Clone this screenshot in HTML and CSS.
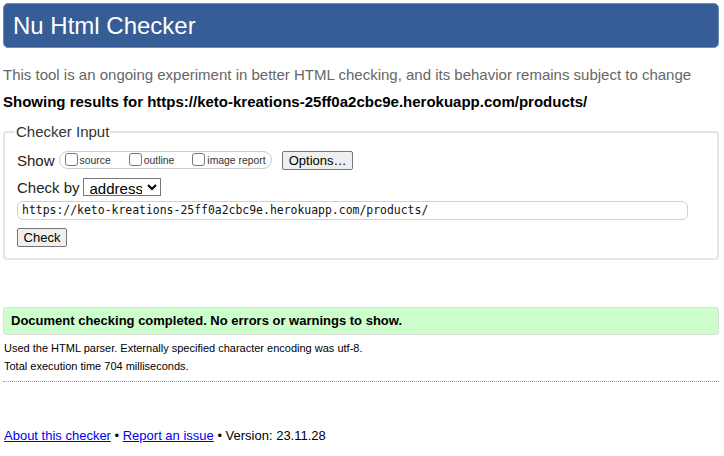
FILE: index.html
```html
<!DOCTYPE html>
<html lang="en">
<head>
<meta charset="utf-8">
<title>Nu Html Checker</title>
<link rel="stylesheet" href="styles.css">
</head>
<body>
<h1 class="banner">Nu Html Checker</h1>
<p class="tagline">This tool is an ongoing experiment in better HTML checking, and its behavior remains subject to change</p>
<p class="results">Showing results for https://keto-kreations-25ff0a2cbc9e.herokuapp.com/products/</p>
<fieldset class="input-box">
  <legend>Checker Input</legend>
  <div class="row show-row">
    <span class="label">Show</span>
    <span class="pill">
      <label class="opt"><input type="checkbox" class="cb">source</label>
      <label class="opt"><input type="checkbox" class="cb">outline</label>
      <label class="opt"><input type="checkbox" class="cb">image report</label>
    </span>
    <button class="btn options" type="button">Options…</button>
  </div>
  <div class="row by-row">
    <span class="label">Check by</span>
    <select class="sel"><option>address</option></select>
  </div>
  <div class="url">https://keto-kreations-25ff0a2cbc9e.herokuapp.com/products/</div>
  <div class="row check-row"><button class="btn check" type="button">Check</button></div>
</fieldset>
<div class="success">Document checking completed. No errors or warnings to show.</div>
<p class="details first">Used the HTML parser. Externally specified character encoding was utf-8.</p>
<p class="details">Total execution time 704 milliseconds.</p>
<hr class="sep">
<p class="footer"><a href="#">About this checker</a> • <a href="#">Report an issue</a> • Version: 23.11.28</p>
</body>
</html>
```
FILE: styles.css
```css
html { background: #fff; }
body {
  margin: 3px 5px 3px 3px;
  font-family: "Liberation Sans", Arial, sans-serif;
  font-size: 15px;
  color: #000;
}
.banner {
  margin: 0;
  height: 45px;
  box-sizing: border-box;
  padding: 8px 9px 0;
  background: #365d95;
  color: #fff;
  font-weight: normal;
  font-size: 24px;
  line-height: 28px;
  border-radius: 5px;
  border: 1px solid #6f8cb5;
}
.tagline {
  margin: 18px 0 0;
  color: #666;
  font-size: 15px;
  line-height: 18px;
}
.results {
  margin: 9px 0 0;
  font-weight: bold;
  font-size: 15px;
  line-height: 18px;
}
.input-box {
  margin: 12px 0 0;
  padding: 10px 12px 11px;
  border: 2px solid #e4e4e4;
  border-radius: 4px;
  min-width: 0;
}
.input-box legend {
  padding: 0 1px;
  margin-left: -2px;
  font-size: 15px;
  color: #333;
}
.row {
  display: flex;
  align-items: center;
}
.label { font-size: 15px; color: #222; white-space: nowrap; }
.show-row { height: 20px; }
.pill {
  display: inline-flex;
  align-items: center;
  flex-shrink: 0;
  margin-left: 4px;
  height: 18px;
  box-sizing: border-box;
  padding: 0 5px 0 5px;
  border: 1px solid #ccc;
  border-radius: 9px;
  font-size: 10.4px;
  color: #333;
  white-space: nowrap;
}
.opt { display: inline-flex; align-items: center; margin-right: 18px; white-space: nowrap; }
.opt:last-child { margin-right: 0; }
.cb {
  -webkit-appearance: none;
  appearance: none;
  flex-shrink: 0;
  width: 13px;
  height: 13px;
  margin: -2px 2px 0 0;
  border: 1px solid #777;
  border-radius: 3px;
  background: #fff;
}
.btn {
  font-family: "Liberation Sans", Arial, sans-serif;
  font-size: 13px;
  color: #000;
  background: #efefef;
  border: 1px solid #767676;
  border-radius: 2px;
  padding: 0 6px;
  height: 19px;
  line-height: 17px;
  white-space: nowrap;
}
.options { margin-left: 10px; width: 71px; flex-shrink: 0; }
.by-row { margin-top: 8px; }
.sel {
  margin-left: 3px;
  width: 78px;
  height: 18px;
  font-family: "Liberation Sans", Arial, sans-serif;
  font-size: 15px;
  border: 1px solid #767676;
  border-radius: 0;
  background: #fff;
  padding: 0 2px;
}
.url {
  margin-top: 5px;
  width: 671px;
  height: 19px;
  box-sizing: border-box;
  border: 1px solid #d0d0d0;
  border-radius: 6px;
  padding: 0 4px;
  font-family: "DejaVu Sans Mono", monospace;
  font-size: 11.45px;
  line-height: 17px;
  color: #111;
}
.check-row { margin-top: 8px; }
.check { width: 50px; padding: 0; }
.success {
  margin-top: 47px;
  height: 28px;
  box-sizing: border-box;
  background: #ccffcc;
  border: 1px solid #ddd;
  border-radius: 3px;
  padding: 0 7px;
  font-weight: bold;
  font-size: 13px;
  line-height: 26px;
}
.details {
  margin: 4px 0 0 1px;
  font-size: 11px;
  line-height: 14px;
}
.details.first { margin-top: 6px; }
.sep {
  margin: 8px 0 0;
  border: 0;
  border-top: 1px dotted #999;
  height: 0;
}
.footer {
  margin: 45px 0 0 1px;
  font-size: 13px;
  line-height: 18px;
}
.footer a { color: #00e; }
```
